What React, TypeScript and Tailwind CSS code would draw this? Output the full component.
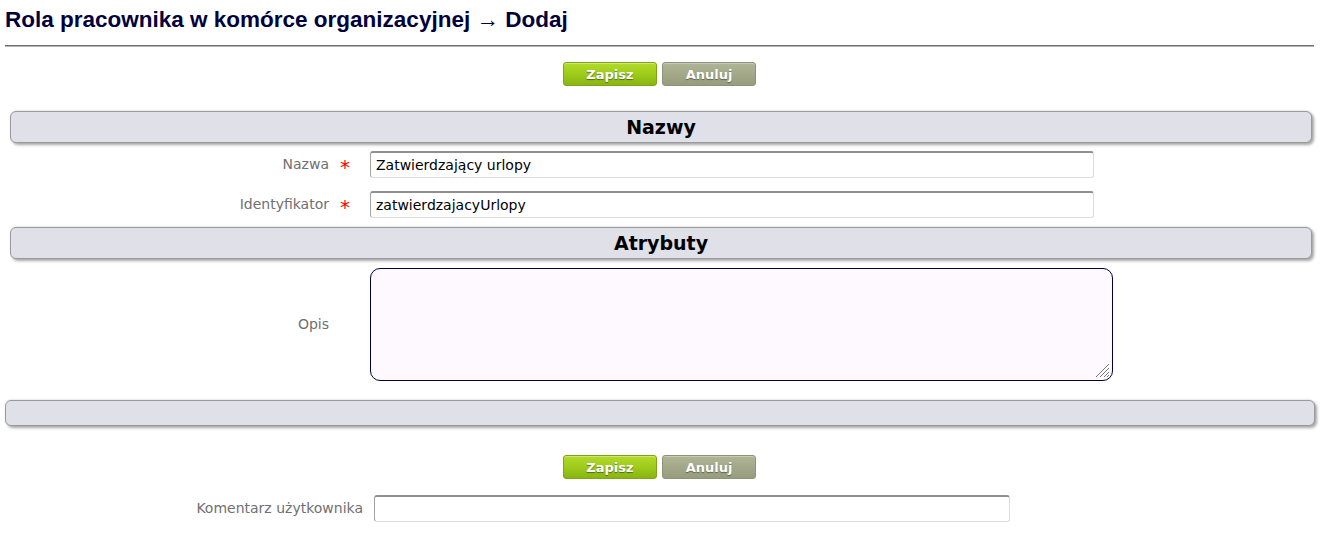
import React from "react";

const sans = { fontFamily: '"DejaVu Sans", Verdana, sans-serif' };

function Buttons() {
  return (
    <div className="flex justify-center gap-[5px] pr-[3px]">
      <button
        className="w-[94px] h-[24px] rounded-[3px] border border-[#7ea614] bg-gradient-to-b from-[#b2dc2a] via-[#9fcb1b] to-[#88b512] text-white font-bold text-[13px] leading-none [text-shadow:0_1px_1px_rgba(0,0,0,0.45)] shadow-[inset_0_1px_0_rgba(255,255,255,0.35)]"
        style={sans}
      >
        Zapisz
      </button>
      <button
        className="w-[94px] h-[24px] rounded-[3px] border border-[#8c917a] bg-gradient-to-b from-[#b0b597] via-[#a3a888] to-[#979c7d] text-white font-bold text-[13px] leading-none [text-shadow:0_1px_1px_rgba(0,0,0,0.4)] shadow-[inset_0_1px_0_rgba(255,255,255,0.3)]"
        style={sans}
      >
        Anuluj
      </button>
    </div>
  );
}

function SectionHeader({ title }: { title: string }) {
  return (
    <div
      className="mx-[10px] h-[32px] rounded-[6px] border border-[#9a9a9a] bg-[#dfe0e8] flex items-center justify-center text-[19px] font-bold text-black shadow-[2px_2px_3px_rgba(0,0,0,0.35),0_-1px_2px_rgba(0,0,0,0.08)]"
      style={sans}
    >
      {title}
    </div>
  );
}

const inputCls =
  "h-[27px] rounded-[3px] border border-[#dcdcdc] border-t-2 border-t-[#8f8f8f] border-l-[#a3a3a3] bg-white px-[5px] text-[14px] text-black outline-none";

function FieldRow({ label, value }: { label: string; value: string }) {
  return (
    <div className="flex items-center">
      <div className="w-[330px] text-right text-[14px] text-[#707070] pr-[1px]" style={sans}>
        {label}
      </div>
      <div className="w-[40px] pl-[10px] text-[#ff0000] text-[20px] leading-none pt-[5px]" style={sans}>
        *
      </div>
      <input className={inputCls + " w-[724px]"} style={sans} defaultValue={value} readOnly />
    </div>
  );
}

export default function App() {
  return (
    <div className="w-[1322px] h-[535px] bg-white overflow-hidden">
      <div className="px-[5px] pt-[7px]">
        <h1
          className="text-[22.5px] leading-[26px] font-bold text-[#00003c]"
          style={{ fontFamily: '"Liberation Sans", Arial, sans-serif' }}
        >
          Rola pracownika w komórce organizacyjnej → Dodaj
        </h1>
        <div className="mt-[12px] mr-[3px] h-[2px] bg-[#6e6e6e] border-b border-[#b5b5b5]" />
      </div>

      <div className="mt-[15px]">
        <Buttons />
      </div>

      <div className="mt-[25px]">
        <SectionHeader title="Nazwy" />
      </div>

      <div className="mt-[8px]">
        <FieldRow label="Nazwa" value="Zatwierdzający urlopy" />
      </div>
      <div className="mt-[13px]">
        <FieldRow label="Identyfikator" value="zatwierdzajacyUrlopy" />
      </div>

      <div className="mt-[9px]">
        <SectionHeader title="Atrybuty" />
      </div>

      <div className="mt-[9px] flex items-center">
        <div className="w-[330px] text-right text-[14px] text-[#707070] pr-[1px]" style={sans}>
          Opis
        </div>
        <div className="w-[40px]" />
        <div className="relative w-[743px] h-[113px]">
          <textarea
            className="block w-full h-full resize-none rounded-[10px] border border-[#000040] bg-[#fef8ff] outline-none p-[5px] text-[14px]"
            style={sans}
          />
          <svg
            className="absolute right-[3px] bottom-[3px]"
            width="16"
            height="16"
            viewBox="0 0 16 16"
          >
            <path d="M15 2 L2 15 M15 6 L6 15 M15 10 L10 15 M15 13 L13 15" stroke="#777" strokeWidth="1" />
          </svg>
        </div>
      </div>

      <div className="mt-[19px] ml-[5px] mr-[7px] h-[26px] rounded-[6px] border border-[#9a9a9a] bg-[#dfe0e8] shadow-[2px_2px_3px_rgba(0,0,0,0.35),0_-1px_2px_rgba(0,0,0,0.08)]" />

      <div className="mt-[29px]">
        <Buttons />
      </div>

      <div className="mt-[16px] flex items-center">
        <div className="w-[363px] text-right text-[14px] text-[#707070]" style={sans}>
          Komentarz użytkownika
        </div>
        <input className={inputCls + " ml-[11px] w-[636px]"} style={sans} readOnly />
      </div>
    </div>
  );
}
